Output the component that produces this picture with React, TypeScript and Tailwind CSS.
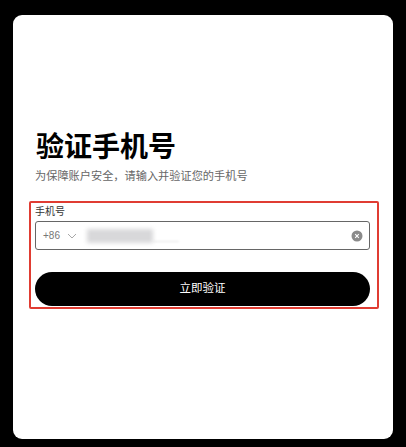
function ClearIcon() {
  return (
    <svg width="12" height="12" viewBox="0 0 12 12" className="shrink-0">
      <circle cx="6" cy="6" r="5.5" fill="#8a8a8a" />
      <path d="M4.2 4.2l3.6 3.6M7.8 4.2l-3.6 3.6" stroke="#ffffff" strokeWidth="1.1" />
    </svg>
  );
}

function ChevronIcon() {
  return (
    <svg width="10" height="6" viewBox="0 0 10 6" className="shrink-0">
      <path d="M1 1l4 4 4-4" fill="none" stroke="#a8a8a8" strokeWidth="1" />
    </svg>
  );
}

export default function App() {
  return (
    <div className="w-[406px] h-[447px] bg-black pt-[15px] pl-[13px] overflow-hidden font-['Liberation_Sans','Noto_Sans_CJK_SC',sans-serif]">
      <div className="w-[380px] h-[424px] bg-white rounded-[9px] pt-[113px] pl-[16px]">
        <h1 className="text-[28px] leading-[40px] font-bold text-black ml-[7px]">验证手机号</h1>
        <p className="text-[11.2px] leading-[18px] text-[#666666] ml-[6px] -mt-[1px]">
          为保障账户安全，请输入并验证您的手机号
        </p>

        {/* Highlighted form */}
        <div className="w-[350px] h-[108px] mt-[16px] border-2 border-[#e03c32] rounded-[2px] pl-[4px] pt-[1px]">
          <label className="block text-[10px] leading-[16px] text-[#333333]">手机号</label>
          <div className="w-[335px] h-[29px] mt-[1px] border border-[#666666] rounded-[3px] flex items-center pl-[7px] pr-[6px]">
            <span className="text-[10px] text-[#777777]">+86</span>
            <span className="ml-[7px]"><ChevronIcon /></span>
            <div className="ml-[10px] flex items-center">
              <div className="w-[66px] h-[14px] bg-[#d8d8da] blur-[2px]" />
              <div className="w-[26px] h-[1px] mt-[12px] bg-[#e4e4e4] blur-[1px]" />
            </div>
            <div className="flex-1" />
            <ClearIcon />
          </div>
          <button className="w-[335px] h-[34px] mt-[22px] bg-black rounded-full text-white text-[11.5px] flex items-center justify-center">
            立即验证
          </button>
        </div>
      </div>
    </div>
  );
}
